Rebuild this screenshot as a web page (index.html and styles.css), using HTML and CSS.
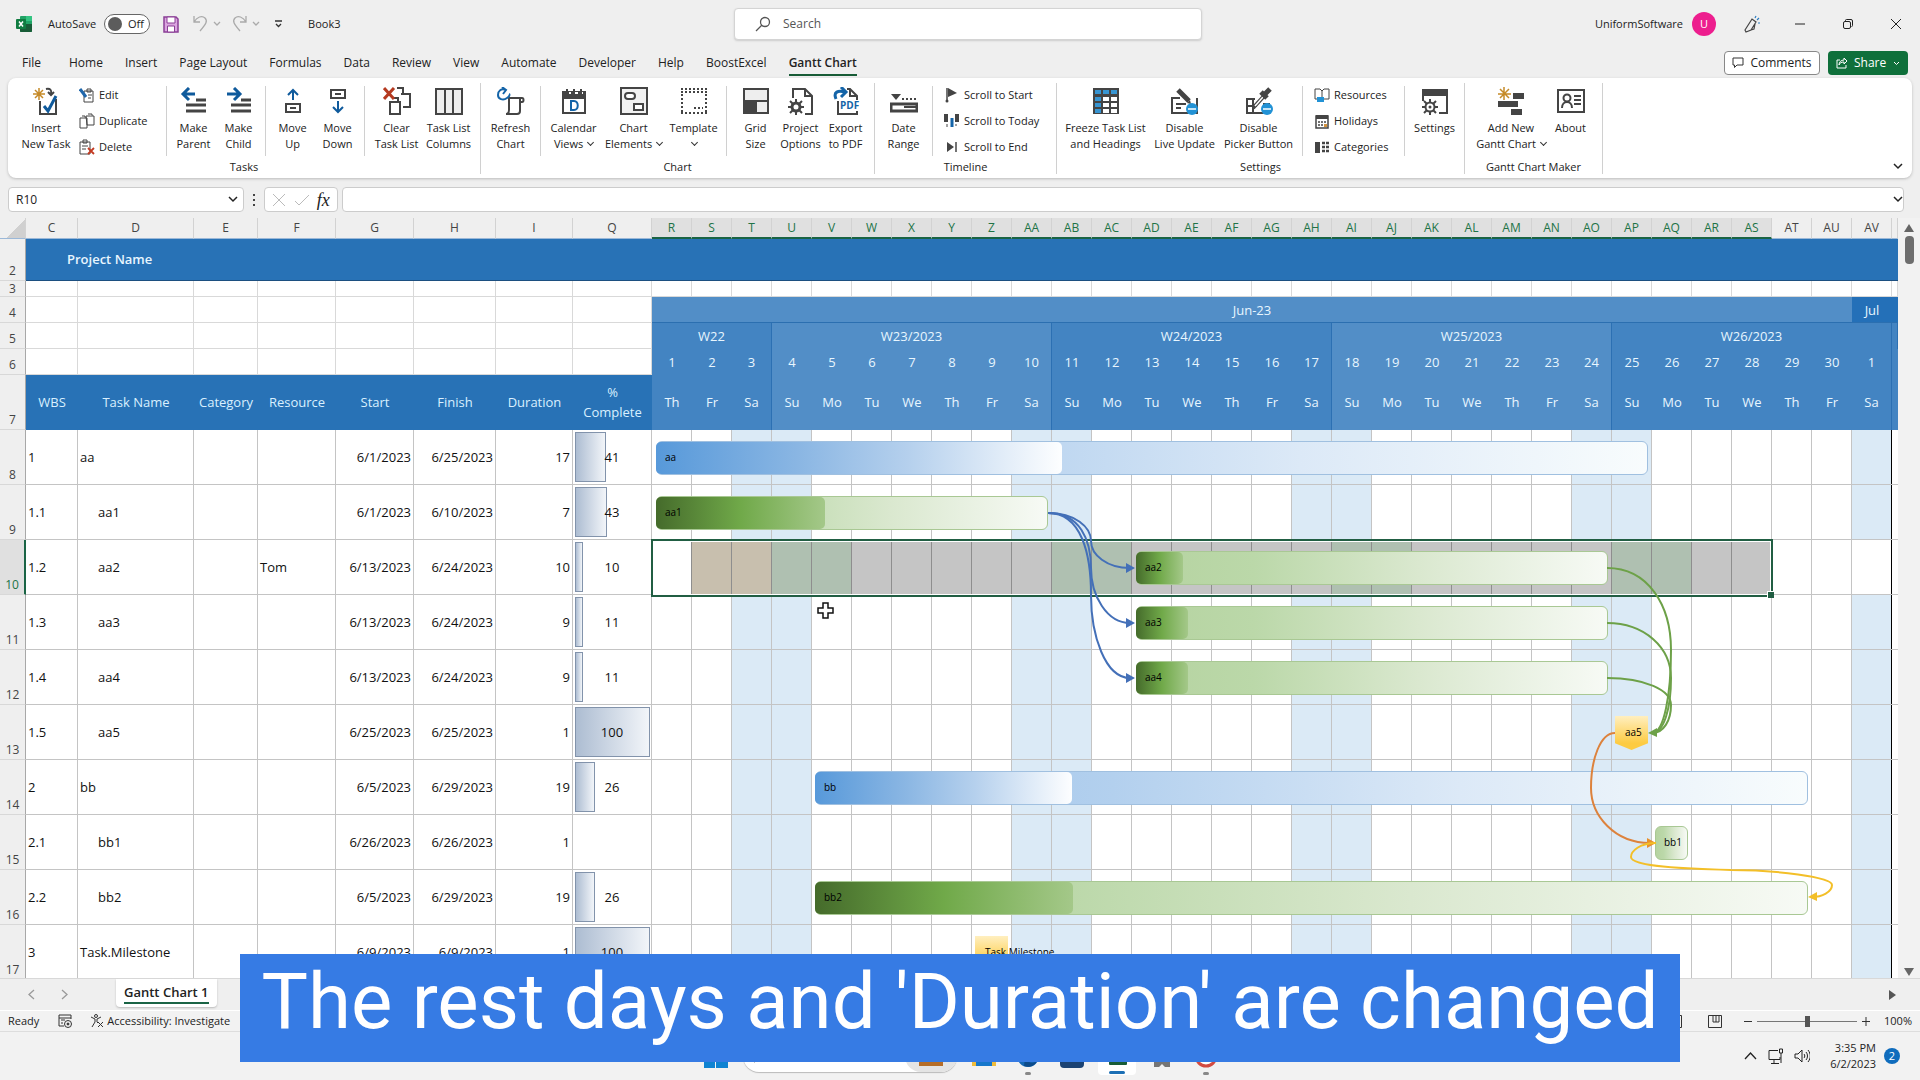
FILE: index.html
```html
<!DOCTYPE html>
<html lang="en">
<head>
<meta charset="utf-8">
<title>Book3 - Excel</title>
<link rel="stylesheet" href="styles.css">
</head>
<body>
<header class="titlebar">
  <div class="quick">
    <svg class="logo" width="16" height="16" viewBox="0 0 16 16"><rect x="4" width="12" height="16" rx="1" fill="#21a366"/><path d="M10 0h5a1 1 0 0 1 1 1v4h-6z" fill="#33c481"/><path d="M4 8h12v7a1 1 0 0 1-1 1H5a1 1 0 0 1-1-1z" fill="#185c37"/><rect y="3" width="10" height="10" rx="1" fill="#107c41"/><path d="M3 5.500l4 5M7 5.500l-4 5" stroke="#fff" stroke-width="1.500"/></svg>
    <span id="autosave-label">AutoSave</span>
    <button class="toggle" role="switch" aria-checked="false" aria-labelledby="autosave-label"><i></i>Off</button>
    <button class="plain save" aria-label="Save"><svg width="16" height="17" viewBox="0 0 16 17"><path d="M1 1h12l2 2v13H1z" fill="#dba6e0" stroke="#8b3f96" stroke-width="1.500"/><path d="M4 1h8v6H4zM4.500 10h7v6h-7z" fill="#fff" stroke="#8b3f96"/></svg></button>
    <button class="plain undo" aria-label="Undo"><svg width="28" height="18" viewBox="0 0 28 18" fill="none" stroke="#aaa" stroke-width="1.300"><path d="M1 1v6h6M1 7C4 2 9 0 12 3s1 6-5 13"/><path d="M21 7l3 3 3-3"/></svg></button>
    <button class="plain redo" aria-label="Redo"><svg width="28" height="18" viewBox="0 0 28 18" fill="none" stroke="#aaa" stroke-width="1.300"><path d="M14 1v6H8M14 7C11 2 6 0 3 3s-1 6 5 13"/><path d="M21 7l3 3 3-3"/></svg></button>
    <button class="plain custom" aria-label="Customize toolbar"><svg width="9" height="8" viewBox="0 0 9 8" fill="none" stroke="#333" stroke-width="1.300"><path d="M1 1h7M2 4l2.500 2.500L7 4"/></svg></button>
    <span class="book">Book3</span>
  </div>
  <label class="search"><svg width="16" height="16" viewBox="0 0 16 16" fill="none" stroke="#555" stroke-width="1.300"><circle cx="10" cy="6" r="4.500"/><path d="M7 9l-6 6"/></svg><input type="search" placeholder="Search" aria-label="Search"></label>
  <div class="account">
    <span>UniformSoftware</span><span class="avatar">U</span>
    <button class="plain" aria-label="Coming soon"><svg width="18" height="18" viewBox="0 0 18 18" fill="none" stroke="#444" stroke-width="1.200"><path d="M2 15L9 4l4 3-5 8-5 2zM8 15l3-1 1-5"/><path d="M12 3l1-2M14 5l2-2M15 8h2" stroke="#2b7cc0"/></svg></button>
    <button class="plain" aria-label="Minimize"><svg width="10" height="10" viewBox="0 0 10 10"><path d="M0 5h10" stroke="#222"/></svg></button>
    <button class="plain" aria-label="Restore"><svg width="10" height="10" viewBox="0 0 10 10" fill="none" stroke="#222"><rect x=".5" y="2.500" width="7" height="7" rx="1.500"/><path d="M2.500 2V1.500a1 1 0 0 1 1-1H8A1.500 1.500 0 0 1 9.500 2v4.500a1 1 0 0 1-1 1"/></svg></button>
    <button class="plain" aria-label="Close"><svg width="10" height="10" viewBox="0 0 10 10"><path d="M0 0l10 10M10 0L0 10" stroke="#222"/></svg></button>
  </div>
</header>

<nav class="tabs" aria-label="Ribbon tabs">
  <a href="#file" class="file">File</a><a href="#home">Home</a><a href="#insert">Insert</a><a href="#layout">Page Layout</a><a href="#formulas">Formulas</a><a href="#data">Data</a><a href="#review">Review</a><a href="#view">View</a><a href="#automate">Automate</a><a href="#developer">Developer</a><a href="#help">Help</a><a href="#boost">BoostExcel</a><a href="#gantt" class="active" aria-current="page">Gantt Chart</a>
  <button class="comments"><svg width="12" height="12" viewBox="0 0 12 12" fill="none" stroke="#333"><path d="M1 1h10v7H5l-2.500 2.500V8H1z"/></svg>Comments</button>
  <button class="share"><svg width="12" height="12" viewBox="0 0 12 12" fill="none" stroke="#fff"><path d="M4 3H1v8h9V8M8 1l3 3-3 3V5C5 5 4 6 3 8c0-3 2-5 5-5z"/></svg>Share<svg class="drop" width="7" height="5" viewBox="0 0 7 5" fill="none" stroke="#fff"><path d="M1 1l2.500 2.500L6 1"/></svg></button>
</nav>

<main class="workspace">
<section class="ribbon" aria-label="Gantt Chart ribbon">
  <div class="group">
    <div class="sections">
      <div class="section s-insert">
        <button class="big w58"><svg viewBox="0 0 28 28"><path d="M8 14v13h16V12" fill="none" stroke="#444" stroke-width="2"/><path d="M12 19l4 5 8-15" fill="none" stroke="#0f5a9c" stroke-width="3"/><path d="M7 1v12M1 7h12M3 3l8 8M11 3l-8 8" stroke="#c58a28" stroke-width="1.500"/><path d="M14 2c4-1 6 1 5 5M16 5l3 3 3-3" fill="none" stroke="#444" stroke-width="2"/></svg>Insert<br>New Task</button>
        <div class="smalls">
          <button><svg viewBox="0 0 16 16"><path d="M5 4h9v11H5z" fill="#fff" stroke="#444"/><path d="M8 2h4v3H8zM9 8h4M9 11h3" fill="none" stroke="#444"/><path d="M1 2l6 8" stroke="#1e66ab" stroke-width="3"/></svg>Edit</button>
          <button><svg viewBox="0 0 16 16" fill="#fff" stroke="#444"><path d="M1 5h7v10H1zM7 3h8v9H8z"/><path d="M3 3h3v2M9 1h4v2"/></svg>Duplicate</button>
          <button><svg viewBox="0 0 16 16"><path d="M1 3h10v12H1z" fill="#fff" stroke="#444"/><path d="M4 1h4v3H4zM3 7h6M3 10h4" fill="none" stroke="#444"/><path d="M9 9l6 6M15 9l-6 6" stroke="#c33a22" stroke-width="1.800"/></svg>Delete</button>
        </div>
      </div>
      <div class="section s-99">
        <button class="big w45"><svg viewBox="0 0 28 28"><path d="M16 13h10M6 18h20M6 24h20" stroke="#444" stroke-width="3"/><path d="M15 7H4M9 1L3 7l6 6" fill="none" stroke="#0f5a9c" stroke-width="3"/></svg>Make<br>Parent</button>
        <button class="big w45"><svg viewBox="0 0 28 28"><path d="M16 13h10M6 18h20M6 24h20" stroke="#444" stroke-width="3"/><path d="M2 7h12M9 1l6 6-6 6" fill="none" stroke="#0f5a9c" stroke-width="3"/></svg>Make<br>Child</button>
      </div>
      <div class="section s-99">
        <button class="big w45"><svg viewBox="0 0 28 28"><path d="M14 13V3M9 8l5-5 5 5" fill="none" stroke="#0f5a9c" stroke-width="2"/><path d="M7 17h14v8H7zM11 21h6" fill="none" stroke="#444" stroke-width="2"/></svg>Move<br>Up</button>
        <button class="big w45"><svg viewBox="0 0 28 28"><path d="M14 14v11M9 20l5 5 5-5" fill="none" stroke="#0f5a9c" stroke-width="2"/><path d="M7 3h14v8H7zM11 7h6" fill="none" stroke="#444" stroke-width="2"/></svg>Move<br>Down</button>
      </div>
      <div class="section s-117">
        <button class="big w52"><svg viewBox="0 0 28 28"><path d="M7 15h10v12H7zM18 7h9v13h-7M14 1h6v5M9 11h6v3" fill="none" stroke="#444" stroke-width="2"/><path d="M1 1l10 11M11 1L1 12" stroke="#b53a20" stroke-width="3"/></svg>Clear<br>Task List</button>
        <button class="big w52"><svg viewBox="0 0 28 28"><path d="M1 2h26v25H1zM10 2v25M18 2v25" fill="#eee" stroke="#444" stroke-width="2"/></svg>Task List<br>Columns</button>
      </div>
    </div>
    <h2>Tasks</h2>
  </div>
  <div class="group">
    <div class="sections">
      <div class="section s-59"><button class="big w52"><svg viewBox="0 0 28 28"><path d="M12 11h13c2 0 2 4 0 4h-2v9c0 3-2 3-3 3H9c2 0 3-1 3-4zM23 15v-4" fill="#fff" stroke="#444" stroke-width="2"/><path d="M9 3C4 1 1 4 1 8s5 6 9 3 2-4 2-4M5 0l4 3-3 4" fill="none" stroke="#1464a8" stroke-width="2"/></svg>Refresh<br>Chart</button></div>
      <div class="section s-186">
        <button class="big w58"><svg viewBox="0 0 28 28"><path d="M3 5h22v21H3z" fill="#fff" stroke="#444" stroke-width="2"/><path d="M3 4h22v8H3z" fill="#444"/><path d="M7 2v4M14 2v4M21 2v4" stroke="#444" stroke-width="2"/><path d="M9 6h2M15 6h3M22 6h1" stroke="#fff" stroke-width="2"/><path d="M11 14h3c5 0 5 9 0 9h-3z" fill="none" stroke="#1464a8" stroke-width="2"/></svg>Calendar<br>Views <b class="caret"></b></button>
        <button class="big w62"><svg viewBox="0 0 28 28"><path d="M1 1h26v26H1z" fill="#f1f1f1" stroke="#444" stroke-width="2"/><rect x="5" y="6" width="10" height="6" rx="3" fill="#fff" stroke="#444" stroke-width="2"/><path d="M14 17h9v6h-9z" fill="#fff" stroke="#444" stroke-width="2"/></svg>Chart<br>Elements <b class="caret"></b></button>
        <button class="big w58"><svg viewBox="0 0 28 28" fill="none" stroke="#444" stroke-width="2" stroke-dasharray="2 2"><path d="M1 2h26M1 5h26M2 7v20M26 7v20M1 26h26M14 21h9"/></svg>Template<br><b class="caret"></b></button>
      </div>
      <div class="section s-149">
        <button class="big w45"><svg viewBox="0 0 28 28"><path d="M2 2h24v24H2z" fill="#eee" stroke="#444" stroke-width="2"/><path d="M2 15h12v11H2z" fill="#444"/><path d="M14 15v11M2 14h24" stroke="#444" stroke-width="2"/></svg>Grid<br>Size</button>
        <button class="big w45"><svg viewBox="0 0 28 28"><path d="M6 11V2h12l7 7v18h-7M18 2v7h7" fill="none" stroke="#444" stroke-width="2"/><circle cx="9" cy="20" r="4" fill="none" stroke="#444" stroke-width="3"/><path d="M9 12v4M9 24v4M1 20h4M13 20h4M3 14l3 3M12 23l3 3M15 14l-3 3M6 23l-3 3" stroke="#444" stroke-width="2"/></svg>Project<br>Options</button>
        <button class="big w45"><svg viewBox="0 0 28 28"><path d="M6 14v13h19V9l-7-7h-3M18 2v7h7" fill="none" stroke="#444" stroke-width="2"/><path d="M4 12C1 5 6 3 13 5M9 0l5 5-5 5" fill="none" stroke="#1464a8" stroke-width="3"/><path d="M7 13h21v11H7z" fill="#fff"/><text x="8" y="22" font-size="10" font-weight="700" fill="#1464a8">PDF</text></svg>Export<br>to PDF</button>
      </div>
    </div>
    <h2>Chart</h2>
  </div>
  <div class="group">
    <div class="sections">
      <div class="section s-57"><button class="big w52"><svg viewBox="0 0 28 28"><path d="M1 7h10l-5 6z" fill="#444"/><path d="M12 12h16" stroke="#444" stroke-width="2" stroke-dasharray="2 2"/><path d="M0 17h28M0 24h28M1 17v7M27 17v7" stroke="#444" stroke-width="3"/><path d="M14 20h13" stroke="#444" stroke-width="2"/></svg>Date<br>Range</button></div>
      <div class="section smalls-section s-125"><div class="smalls">
        <button><svg viewBox="0 0 16 16"><path d="M3 1v13" stroke="#444" stroke-width="1.500"/><path d="M4 1l9 5-9 4z" fill="#444"/><circle cx="3" cy="14" r="1.500" fill="#444"/></svg>Scroll to Start</button>
        <button><svg viewBox="0 0 16 16"><path d="M2 1v8M13 1v8" stroke="#444" stroke-width="4"/><path d="M8 5v9" stroke="#1464a8" stroke-width="3"/><path d="M3 11v3M12 11v2" stroke="#444"/></svg>Scroll to Today</button>
        <button><svg viewBox="0 0 16 16"><path d="M3 3l7 5-7 5z" fill="#444"/><path d="M12 3v10" stroke="#444" stroke-width="1.500"/></svg>Scroll to End</button>
      </div></div>
    </div>
    <h2>Timeline</h2>
  </div>
  <div class="group">
    <div class="sections">
      <div class="section s-245">
        <button class="big w84"><svg viewBox="0 0 28 28"><path d="M1 1h26v26H1z" fill="#444"/><path d="M3 3h6v4H3zM11 3h6v4h-6zM19 3h6v4h-6zM3 10h6v4H3zM3 16h6v4H3zM3 22h6v4H3z" fill="#3795d2"/><path d="M11 10h6v4h-6zM19 10h6v4h-6zM11 16h6v4h-6zM19 16h6v4h-6zM11 22h6v4h-6zM19 22h6v4h-6z" fill="#fff"/></svg>Freeze Task List<br>and Headings</button>
        <button class="big w74"><svg viewBox="0 0 28 28"><path d="M9 11H1v15h25V11M5 17h10M5 21h5" fill="none" stroke="#444" stroke-width="2"/><path d="M7 3l11 11" stroke="#444" stroke-width="5"/><path d="M16 16l4 1-1-4z" fill="#444"/><circle cx="21" cy="22" r="6" fill="#2292d5"/><path d="M17 22h8" stroke="#fff" stroke-width="1.500"/></svg>Disable<br>Live Update</button>
        <button class="big w74"><svg viewBox="0 0 28 28"><path d="M10 12H2v14h20M2 19h10M8 12v14M18 17h7" fill="none" stroke="#444" stroke-width="2"/><path d="M8 21L20 8" stroke="#444" stroke-width="4"/><path d="M10 19l8-9" stroke="#fff" stroke-width="1.500"/><path d="M16 5l6 6M20 7l5-5" stroke="#444" stroke-width="5"/><circle cx="22" cy="22" r="6" fill="#2292d5"/><path d="M18 22h8" stroke="#fff" stroke-width="1.500"/></svg>Disable<br>Picker Button</button>
      </div>
      <div class="section smalls-section s-102"><div class="smalls">
        <button><svg viewBox="0 0 16 16"><path d="M1 2h5l2 2 2-2h5v10h-5l-2 2-2-2H1zM8 4v9" fill="#fff" stroke="#444"/><path d="M3 10h7v5H3z" fill="#2292d5"/></svg>Resources</button>
        <button><svg viewBox="0 0 16 16"><path d="M2 3h12v12H2z" fill="#fff" stroke="#444" stroke-width="1.500"/><path d="M2 2h12v4H2z" fill="#444"/><path d="M4 9h9M4 12h9" stroke="#444" stroke-width="1.500" stroke-dasharray="2 1"/><path d="M10 11h3v3h-3z" fill="#d4923d"/></svg>Holidays</button>
        <button><svg viewBox="0 0 16 16"><path d="M1 3h5v11H1z" fill="#444"/><path d="M8 4h7M8 8h7M8 12h7" stroke="#444" stroke-width="2.500" stroke-dasharray="3 1"/></svg>Categories</button>
      </div></div>
      <div class="section s-61"><button class="big w52"><svg viewBox="0 0 28 28"><path d="M1 3h26v6H1z" fill="#444"/><path d="M2 14V3h24v23H18" fill="none" stroke="#444" stroke-width="2"/><circle cx="9" cy="20" r="4.500" fill="#fff" stroke="#444" stroke-width="2"/><path d="M9 12v4M9 24v4M1 20h4M13 20h4M3 14l3 3M12 23l3 3M15 14l-3 3M6 23l-3 3" stroke="#444" stroke-width="2"/><circle cx="9" cy="20" r="1.500" fill="#444"/></svg>Settings</button></div>
    </div>
    <h2>Settings</h2>
  </div>
  <div class="group">
    <div class="sections">
      <div class="section s-137">
        <button class="big w74"><svg viewBox="0 0 28 28"><path d="M16 6h11v6H16zM1 14h20v6H1zM14 22h11v6H14z" fill="#444"/><path d="M7 0v13M1 7h13M3 2l9 9M12 2l-9 9" stroke="#c58a28" stroke-width="1.500"/></svg>Add New<br>Gantt Chart <b class="caret"></b></button>
        <button class="big w45"><svg viewBox="0 0 28 28"><path d="M1 3h26v22H1z" fill="#fff" stroke="#444" stroke-width="2"/><circle cx="10" cy="11" r="3.500" fill="none" stroke="#444" stroke-width="2"/><path d="M5 21c0-8 10-8 10 0M17 9h7M17 13h7M17 17h7" fill="none" stroke="#444" stroke-width="2"/></svg>About</button>
      </div>
    </div>
    <h2>Gantt Chart Maker</h2>
  </div>
  <button class="plain collapse" aria-label="Collapse the ribbon"><svg width="10" height="7" viewBox="0 0 10 7" fill="none" stroke="#222" stroke-width="1.500"><path d="M1 1l4 4 4-4"/></svg></button>
</section>

<section class="formula">
  <label class="namebox"><input value="R10" aria-label="Name box"><svg width="10" height="7" viewBox="0 0 10 7" fill="none" stroke="#222" stroke-width="1.500"><path d="M1 1l4 4 4-4"/></svg></label>
  <svg width="3" height="12" viewBox="0 0 3 12" fill="#444"><path d="M0 0h2v2H0zM0 5h2v2H0zM0 10h2v2H0z"/></svg>
  <div class="fx">
    <button class="plain" aria-label="Cancel"><svg width="14" height="14" viewBox="0 0 14 14" stroke="#bbb"><path d="M1 1l12 12M13 1L1 13"/></svg></button>
    <button class="plain" aria-label="Enter"><svg width="16" height="12" viewBox="0 0 16 12" fill="none" stroke="#bbb"><path d="M1 7l4 4L15 1"/></svg></button>
    <button class="plain fn" aria-label="Insert function">fx</button>
  </div>
  <label class="entry"><input aria-label="Formula"><svg width="10" height="7" viewBox="0 0 10 7" fill="none" stroke="#222" stroke-width="1.500"><path d="M1 1l4 4 4-4"/></svg></label>
</section>

<section class="sheet">
  <div class="canvas">
  <table>
    <colgroup><col class="c-row"><col class="c-c"><col class="c-d"><col class="c-e"><col class="c-f"><col class="c-g"><col class="c-h"><col class="c-i"><col class="c-q"><col class="c-day" span="31"><col></colgroup>
    <thead>
      <tr class="letters"><th class="corner"></th><th>C</th><th>D</th><th>E</th><th>F</th><th>G</th><th>H</th><th>I</th><th>Q</th><th>R</th><th>S</th><th>T</th><th>U</th><th>V</th><th>W</th><th>X</th><th>Y</th><th>Z</th><th>AA</th><th>AB</th><th>AC</th><th>AD</th><th>AE</th><th>AF</th><th>AG</th><th>AH</th><th>AI</th><th>AJ</th><th>AK</th><th>AL</th><th>AM</th><th>AN</th><th>AO</th><th>AP</th><th>AQ</th><th>AR</th><th>AS</th><th>AT</th><th>AU</th><th>AV</th><th></th></tr>
    </thead>
    <tbody>
      <tr class="project"><th>2</th><td colspan="40">Project Name</td></tr>
      <tr class="blank r3"><th>3</th><td></td><td></td><td></td><td></td><td></td><td></td><td></td><td></td><td class="thin" colspan="32"></td></tr>
      <tr class="blank r26"><th>4</th><td></td><td></td><td></td><td></td><td></td><td></td><td></td><td></td><td class="month" colspan="30">Jun-23</td><td class="month next">Jul</td><td class="month next"></td></tr>
      <tr class="blank r26"><th>5</th><td></td><td></td><td></td><td></td><td></td><td></td><td></td><td></td><td class="week" colspan="3">W22</td><td class="week light" colspan="7">W23/2023</td><td class="week" colspan="7">W24/2023</td><td class="week light" colspan="7">W25/2023</td><td class="week" colspan="7">W26/2023</td><td class="week"></td></tr>
      <tr class="blank r26 days"><th>6</th><td></td><td></td><td></td><td></td><td></td><td></td><td></td><td></td><td>1</td><td>2</td><td>3</td><td>4</td><td>5</td><td>6</td><td>7</td><td>8</td><td>9</td><td>10</td><td>11</td><td>12</td><td>13</td><td>14</td><td>15</td><td>16</td><td>17</td><td>18</td><td>19</td><td>20</td><td>21</td><td>22</td><td>23</td><td>24</td><td>25</td><td>26</td><td>27</td><td>28</td><td>29</td><td>30</td><td>1</td><td></td></tr>
      <tr class="fields days"><th>7</th><td>WBS</td><td>Task Name</td><td>Category</td><td>Resource</td><td>Start</td><td>Finish</td><td>Duration</td><td>%<br>Complete</td><td>Th</td><td>Fr</td><td>Sa</td><td>Su</td><td>Mo</td><td>Tu</td><td>We</td><td>Th</td><td>Fr</td><td>Sa</td><td>Su</td><td>Mo</td><td>Tu</td><td>We</td><td>Th</td><td>Fr</td><td>Sa</td><td>Su</td><td>Mo</td><td>Tu</td><td>We</td><td>Th</td><td>Fr</td><td>Sa</td><td>Su</td><td>Mo</td><td>Tu</td><td>We</td><td>Th</td><td>Fr</td><td>Sa</td><td></td></tr>
      <tr class="task"><th>8</th><td>1</td><td>aa</td><td></td><td></td><td>6/1/2023</td><td>6/25/2023</td><td>17</td><td><i style="width:41%"></i><span>41</span></td><td class="time" colspan="32"></td></tr>
      <tr class="task"><th>9</th><td>1.1</td><td class="sub">aa1</td><td></td><td></td><td>6/1/2023</td><td>6/10/2023</td><td>7</td><td><i style="width:43%"></i><span>43</span></td><td class="time" colspan="32"></td></tr>
      <tr class="task current"><th>10</th><td>1.2</td><td class="sub">aa2</td><td></td><td>Tom</td><td>6/13/2023</td><td>6/24/2023</td><td>10</td><td><i style="width:10%"></i><span>10</span></td><td class="time" colspan="32"></td></tr>
      <tr class="task"><th>11</th><td>1.3</td><td class="sub">aa3</td><td></td><td></td><td>6/13/2023</td><td>6/24/2023</td><td>9</td><td><i style="width:11%"></i><span>11</span></td><td class="time" colspan="32"></td></tr>
      <tr class="task"><th>12</th><td>1.4</td><td class="sub">aa4</td><td></td><td></td><td>6/13/2023</td><td>6/24/2023</td><td>9</td><td><i style="width:11%"></i><span>11</span></td><td class="time" colspan="32"></td></tr>
      <tr class="task"><th>13</th><td>1.5</td><td class="sub">aa5</td><td></td><td></td><td>6/25/2023</td><td>6/25/2023</td><td>1</td><td><i style="width:100%"></i><span>100</span></td><td class="time" colspan="32"></td></tr>
      <tr class="task"><th>14</th><td>2</td><td>bb</td><td></td><td></td><td>6/5/2023</td><td>6/29/2023</td><td>19</td><td><i style="width:26%"></i><span>26</span></td><td class="time" colspan="32"></td></tr>
      <tr class="task"><th>15</th><td>2.1</td><td class="sub">bb1</td><td></td><td></td><td>6/26/2023</td><td>6/26/2023</td><td>1</td><td></td><td class="time" colspan="32"></td></tr>
      <tr class="task"><th>16</th><td>2.2</td><td class="sub">bb2</td><td></td><td></td><td>6/5/2023</td><td>6/29/2023</td><td>19</td><td><i style="width:26%"></i><span>26</span></td><td class="time" colspan="32"></td></tr>
      <tr class="task"><th>17</th><td>3</td><td>Task.Milestone</td><td></td><td></td><td>6/9/2023</td><td>6/9/2023</td><td>1</td><td><i style="width:100%"></i><span>100</span></td><td class="time" colspan="32"></td></tr>
    </tbody>
  </table>
  <div class="chart">
    <div class="selection"></div>
    <div class="bar blue" style="left:5px;top:11px;width:992px"><i style="width:406px"></i><span>aa</span></div>
    <div class="bar green" style="left:5px;top:66px;width:392px"><i style="width:169px"></i><span>aa1</span></div>
    <div class="bar green" style="left:485px;top:121px;width:472px"><i style="width:47px"></i><span>aa2</span></div>
    <div class="bar green" style="left:485px;top:176px;width:472px"><i style="width:52px"></i><span>aa3</span></div>
    <div class="bar green" style="left:485px;top:231px;width:472px"><i style="width:52px"></i><span>aa4</span></div>
    <div class="mark" style="left:964px;top:286px"><span>aa5</span></div>
    <div class="bar blue" style="left:164px;top:341px;width:993px"><i style="width:257px"></i><span>bb</span></div>
    <div class="bar green" style="left:1004px;top:396px;width:33px"><span>bb1</span></div>
    <div class="bar green" style="left:164px;top:451px;width:993px"><i style="width:258px"></i><span>bb2</span></div>
    <div class="mark" style="left:324px;top:506px"><span>Task Milestone</span></div>
    <svg class="links" width="1240" height="550" viewBox="651 430 1240 550" fill="none" stroke-width="2">
      <g stroke="#4470b8"><path d="M1048 513C1075 513 1091 527 1091 541S1107 568 1130 568"/><path d="M1048 513C1080 513 1091 540 1091 568S1107 623 1130 623"/><path d="M1048 513C1082 513 1091 555 1091 595S1105 678 1130 678"/></g>
      <path d="M1126 563l9 5-9 5zM1126 618l9 5-9 5zM1126 673l9 5-9 5z" fill="#4470b8"/>
      <g stroke="#6da148"><path d="M1607 568C1648 568 1671 605 1671 650S1664 733 1652 733"/><path d="M1607 623C1645 623 1671 648 1671 678S1664 733 1652 733"/><path d="M1607 678C1645 678 1671 690 1671 705S1664 733 1652 733"/></g>
      <path d="M1648 733l9-5v9z" fill="#6da148"/>
      <path d="M1615 733C1600 733 1591 760 1591 788S1615 843 1650 843" stroke="#dd823c"/><path d="M1647 838l9 5-9 5z" fill="#e8902c"/>
      <path d="M1656 843C1640 843 1631 851 1631 857C1631 867 1690 869 1731 870C1775 870 1832 877 1832 885C1832 892 1822 897 1812 897" stroke="#f3bf28"/><path d="M1808 897l9-5v9z" fill="#f3bf28"/>
      <path d="M823 603h5v5h5v5h-5v5h-5v-5h-5v-5h5z" fill="#fff" stroke="#111" stroke-width="1.500"/>
    </svg>
  </div>
  </div>
  <div class="vscroll"><svg width="10" height="8" viewBox="0 0 10 8"><path d="M0 8l5-8 5 8z" fill="#666"/></svg><i></i><svg width="10" height="8" viewBox="0 0 10 8"><path d="M0 0l5 8 5-8z" fill="#666"/></svg></div>
</section>
</main>

<footer>
  <div class="sheettabs">
    <button class="plain" aria-label="Previous sheet"><svg width="8" height="11" viewBox="0 0 8 11" fill="none" stroke="#999" stroke-width="1.300"><path d="M6 1L1 5.500 6 10"/></svg></button>
    <button class="plain" aria-label="Next sheet"><svg width="8" height="11" viewBox="0 0 8 11" fill="none" stroke="#999" stroke-width="1.300"><path d="M1 1l5 4.500L1 10"/></svg></button>
    <a href="#sheet1"><span>Gantt Chart 1</span></a>
    <svg class="right" width="7" height="10" viewBox="0 0 7 10"><path d="M0 0l7 5-7 5z" fill="#555"/></svg>
  </div>
  <div class="status">
    <span class="ready">Ready</span>
    <svg width="14" height="14" viewBox="0 0 14 14" fill="none" stroke="#333"><path d="M6 12H1V1h12v4M1 4h12M3 6h4M3 9h2"/><circle cx="10" cy="10" r="3.500"/><circle cx="10" cy="10" r="1" fill="#333"/></svg>
    <svg class="access" width="14" height="14" viewBox="0 0 14 14" fill="none" stroke="#333"><circle cx="6" cy="2" r="1.500"/><path d="M1 3l4 2v3l-3 5M11 3L7 5v3l1 1M8 8l5 5M13 8l-5 5"/></svg>
    <span>Accessibility: Investigate</span>
    <div class="zoom">
      <svg width="14" height="13" viewBox="0 0 14 13" fill="none" stroke="#333"><path d="M.5.500h13v12H.5zM3 3h8v7H3zM5 5h4M5 8h4"/></svg>
      <svg width="14" height="13" viewBox="0 0 14 13" fill="none" stroke="#333"><path d="M.5.500h13v12H.5zM5 1v6h6M8 1v6M11 1v6"/></svg>
      <button class="plain" aria-label="Zoom out"><svg width="8" height="9" viewBox="0 0 8 9"><path d="M0 4.500h8" stroke="#333"/></svg></button>
      <input type="range" min="0" max="100" value="50" aria-label="Zoom">
      <button class="plain" aria-label="Zoom in"><svg width="8" height="9" viewBox="0 0 8 9"><path d="M0 4.500h8M4 0v9" stroke="#333"/></svg></button>
      <span>100%</span>
    </div>
  </div>
  <div class="taskbar">
    <div class="apps">
      <svg width="24" height="24" viewBox="0 0 24 24" fill="#0f83d2"><path d="M0 0h11v11H0zM12 0h12v11H12zM0 12h11v12H0zM12 12h12v12H12z"/></svg>
      <div class="pill"><svg width="14" height="14" viewBox="0 0 14 14" fill="none" stroke="#222" stroke-width="1.500"><circle cx="8" cy="6" r="4.500"/><path d="M5 10l-3 3"/></svg><i></i></div>
      <svg width="24" height="20" viewBox="0 0 24 20"><path d="M0 0h9l3 3h12v17H0z" fill="#f0bc3c"/><path d="M4 11h16v9H4z" fill="#1677cb"/></svg>
      <svg width="24" height="40" viewBox="0 0 24 40"><circle cx="12" cy="20" r="11" fill="#1468b5"/><path d="M9 22c3 5 8 6 12 3-2 5-8 7-13 5z" fill="#0c4b8a"/><rect x="9" y="36" width="6" height="3" rx="1.500" fill="#888"/></svg>
      <svg width="24" height="24" viewBox="0 0 24 24"><rect width="24" height="24" rx="4" fill="#1c4373"/><path d="M8 13h3v4H8zM13 13h3v4h-3z" fill="#8fb7df"/></svg>
      <div class="tile"><svg width="20" height="36" viewBox="0 0 20 36"><rect x="2" y="7" width="18" height="20" rx="1" fill="#185c37"/><rect y="11" width="11" height="12" fill="#107c41"/><rect x="2" y="33" width="16" height="3" rx="1.500" fill="#1c6fb5"/></svg></div>
      <svg width="24" height="24" viewBox="0 0 24 24"><path d="M4 10h16v13h-5l-3-3-3 3H4z" fill="#757575"/></svg>
      <svg width="24" height="40" viewBox="0 0 24 40"><circle cx="12" cy="20" r="10" fill="#fff" stroke="#d34b41" stroke-width="3"/><rect x="9" y="36" width="6" height="3" rx="1.500" fill="#888"/></svg>
    </div>
    <div class="tray">
      <svg width="13" height="8" viewBox="0 0 13 8" fill="none" stroke="#222" stroke-width="1.300"><path d="M1 7l5.500-6L12 7"/></svg>
      <svg width="17" height="16" viewBox="0 0 17 16" fill="none" stroke="#222"><path d="M11 2.500H2v9h11V9M7 12v3M4 15.500h8M12.500 1h3v4h-3zM14 5v10"/></svg>
      <svg width="16" height="14" viewBox="0 0 16 14" fill="none" stroke="#222"><path d="M1 5h3l4-4v12L4 9H1zM10 5c1 1 1 3 0 4M12 3c2 2 2 6 0 8M14 1c3 4 3 8 0 12"/></svg>
      <time>3:35 PM<br>6/2/2023</time>
      <span class="badge">2</span>
    </div>
  </div>
</footer>
<div class="caption"><p>The rest days and 'Duration' are changed</p></div>
</body>
</html>
```
FILE: styles.css
```css
* { box-sizing: border-box; }
body {
  margin: 0;
  height: 100vh;
  display: flex;
  flex-direction: column;
  overflow: hidden;
  background: #efefef;
  color: #222;
  font: 11px/16px "Open Sans", "Noto Sans", sans-serif;
}
button, input { font: inherit; color: inherit; }
button { border: 0; background: none; padding: 0; }
a { color: inherit; text-decoration: none; }
svg { display: block; flex: none; }
.plain { display: flex; align-items: center; justify-content: center; }

/* Title bar */
.titlebar {
  height: 48px;
  flex: none;
  display: grid;
  grid-template-columns: 1fr 468px 1fr;
  align-items: center;
  padding-left: 16px;
}
.quick, .account { display: flex; align-items: center; }
.logo { margin-right: 16px; }
.toggle {
  width: 46px;
  height: 20px;
  margin: 0 13px 0 8px;
  border: 1px solid #666;
  border-radius: 10px;
  background: #fff;
  display: flex;
  align-items: center;
  gap: 6px;
  padding-left: 3px;
}
.toggle i { width: 14px; height: 14px; border-radius: 50%; background: #5c5c5c; }
.undo { margin-left: 14px; }
.redo { margin-left: 11px; }
.custom { margin: 0 25px 0 14px; }
.search {
  height: 32px;
  background: #fff;
  border: 1px solid #d4d4d4;
  border-radius: 4px;
  display: flex;
  align-items: center;
  padding-left: 20px;
  gap: 12px;
  box-shadow: 0 1px 2px #ccc;
}
input { border: 0; background: none; outline: 0; min-width: 0; padding: 0; }
.search input { flex: 1; font-size: 12px; }
.search input::placeholder { color: #555; opacity: 1; }
.account { justify-content: flex-end; }
.avatar {
  width: 24px;
  height: 24px;
  margin: 0 12px 0 9px;
  border-radius: 50%;
  background: #ed1e8e;
  color: #fff;
  line-height: 24px;
  text-align: center;
}
.account .plain { width: 48px; height: 32px; }

/* Ribbon tabs */
.tabs {
  height: 30px;
  flex: none;
  display: flex;
  align-items: center;
  gap: 22px;
  padding: 0 12px 0 22px;
  font-size: 12px;
}
.tabs a { height: 26px; line-height: 26px; border-bottom: 2px solid transparent; }
.tabs .file { margin-right: 6px; }
.tabs .active { font-weight: 600; border-color: #185c37; }
.comments, .share {
  height: 24px;
  display: flex;
  align-items: center;
  gap: 6px;
  padding: 0 8px;
  border-radius: 4px;
}
.comments { margin-left: auto; width: 96px; border: 1px solid #888; background: #fff; justify-content: center; }
.share { width: 80px; background: #0f703b; color: #fff; margin-left: -14px; }
.share .drop { margin-left: auto; }

/* Ribbon */
.workspace { flex: 1; min-height: 0; display: flex; flex-direction: column; }
.ribbon {
  margin: 0 8px;
  height: 100px;
  flex: none;
  display: flex;
  background: #fff;
  border-radius: 8px;
  box-shadow: 0 1px 3px #bbb;
}
.group { margin: 5px 0 4px; border-right: 1px solid #d0d0d0; display: flex; flex-direction: column; }
.group h2 { margin: auto 0 0; font-size: 11px; line-height: 14px; font-weight: 400; text-align: center; }
.sections { display: flex; padding-top: 3px; }
.section { height: 70px; display: flex; justify-content: center; }
.section + .section { border-left: 1px solid #d0d0d0; }
.s-insert { width: 158px; padding-left: 9px; }
.s-99 { width: 99px; }
.s-117 { width: 116px; }
.s-59 { width: 59px; }
.s-186 { width: 186px; }
.s-149 { width: 148px; }
.s-57 { width: 57px; }
.s-125 { width: 124px; }
.s-245 { width: 245px; }
.s-102 { width: 102px; }
.s-61 { width: 60px; }
.s-137 { width: 137px; }
.big { display: block; align-self: start; padding: 1px 0; line-height: 16px; white-space: nowrap; text-align: center; }
.big svg { width: 28px; height: 28px; margin: 0 auto 5px; }
.w45 { width: 45px; }
.w52 { width: 52px; }
.w58 { width: 58px; }
.w62 { width: 62px; }
.w74 { width: 74px; }
.w84 { width: 84px; }
.caret { display: inline-block; width: 5px; height: 5px; border: solid #333; border-width: 0 1px 1px 0; transform: rotate(45deg); margin: 0 0 3px 2px; }
.smalls { flex: 1; display: flex; flex-direction: column; gap: 8px; padding: 0 0 0 4px; }
.smalls button { display: flex; align-items: center; gap: 4px; height: 18px; white-space: nowrap; }
.smalls svg { width: 16px; height: 16px; }
.smalls-section { padding-left: 7px; }
.collapse { margin: auto 9px 8px auto; }

/* Formula bar */
.formula { height: 25px; margin: 9px 16px 6px 8px; flex: none; display: flex; align-items: center; font-size: 12px; }
.namebox, .entry, .fx {
  height: 25px;
  display: flex;
  align-items: center;
  background: #fff;
  border: 1px solid #ccc;
  border-radius: 4px;
}
.namebox { width: 236px; padding: 0 5px 0 7px; margin-right: 9px; }
.namebox input, .entry input { flex: 1; }
.fx { width: 74px; margin: 0 4px 0 8px; justify-content: space-evenly; }
.fn { font: italic 18px/20px "Liberation Serif", serif; }
.entry { flex: 1; }

/* Worksheet */
.sheet { flex: 1; min-height: 0; display: flex; }
.canvas { flex: 1; min-width: 0; position: relative; overflow: hidden; background: #fff; }
table { width: 100%; table-layout: fixed; border-collapse: separate; border-spacing: 0; font-size: 13px; color: #111; }
.c-row { width: 26px; }
.c-c { width: 52px; }
.c-d { width: 116px; }
.c-e { width: 64px; }
.c-f, .c-g { width: 78px; }
.c-h { width: 82px; }
.c-i { width: 77px; }
.c-q { width: 79px; }
.c-day { width: 40px; }
th, td { padding: 0; line-height: 20px; text-align: center; overflow: hidden; white-space: nowrap; }
th { background: #efefef; color: #444; font-weight: 400; }
.letters { height: 21px; font-size: 12px; }
.letters th { border-right: 1px solid #d2d2d2; border-bottom: 1px solid #9bb8d8; }
.letters th:nth-child(n+10):nth-child(-n+37) { background: #e0e0e0; color: #217346; border-bottom: 2px solid #1a6445; line-height: 19px; }
.letters .corner { background: linear-gradient(135deg, #efefef 60%, #d0d0d0 60%); }
tbody th { vertical-align: bottom; font-size: 12px; line-height: 18px; border-right: 1px solid #a8a8a8; border-bottom: 1px solid #d8d8d8; }
.project { height: 42px; }
.project td { background: #2872b6; color: #e8f6ff; border-bottom: 1px solid #1c4f80; text-align: left; padding: 0 0 2px 41px; font-weight: 600; }
.blank td { border-right: 1px solid #d9d9d9; border-bottom: 1px solid #d9d9d9; }
.r3 { height: 16px; }
.r3 th { line-height: 15px; }
.thin { background: repeating-linear-gradient(90deg, transparent 0 39px, #d9d9d9 39px 40px); }
.r26 { height: 26px; }
.blank .month { background: #528ec7; color: #e8f6ff; border: 0; border-bottom: 1px solid #2b6fb0; }
.blank .next { background: #2470b8; }
.blank .week { background: #4384c2; color: #e8f6ff; border: 0; border-right: 1px solid #2c70b3; }
.blank .light { background: #528ec7; }
.fields { height: 55px; color: #d9f0ff; }
.fields td { background: #2872b6; padding-bottom: 2px; }
.days td:nth-child(n+10) { background: #4384c2; color: #e8f6ff; border: 0; }
.days td:nth-child(n+13):nth-child(-n+19), .days td:nth-child(n+27):nth-child(-n+33) { background: #528ec7; }
.days td:nth-child(7n+5):nth-child(n+10) { border-right: 1px solid #2c70b3; }
.task { height: 55px; }
.task td { border-right: 1px solid #c4c4c4; border-bottom: 1px solid #c4c4c4; text-align: left; padding-left: 2px; }
.task .sub { padding-left: 20px; }
.task td:nth-child(6), .task td:nth-child(7), .task td:nth-child(8) { text-align: right; padding-right: 2px; }
.task td:nth-child(9) { position: relative; padding: 0 1px 0 2px; text-align: center; }
.task td i { display: block; height: 50px; border: 1px solid #8293ab; background: linear-gradient(90deg, #adbdd2, #f2f5f9); }
.task td i + span { position: absolute; inset: 17px 0 auto 0; }
.task .time {
  padding: 0;
  border-right: 0;
  background:
    linear-gradient(90deg, transparent 1239px, #000 1239px 1240px, #fff 1240px),
    repeating-linear-gradient(90deg, transparent 0 39px, #c4c4c4 39px 40px),
    repeating-linear-gradient(90deg, #fff 0 80px, #dbeaf6 80px 160px, #fff 160px 280px);
}
.current th { background: #e0e0e0; color: #217346; border-right: 2px solid #1a6445; }
.task.current .time { background: linear-gradient(90deg, transparent 1239px, #000 1239px 1240px, #fff 1240px), repeating-linear-gradient(90deg, #fff 0 39px, #c4c4c4 39px 40px); }

/* Gantt layer over the grid */
.chart { position: absolute; left: 651px; top: 212px; }
.selection {
  position: absolute;
  left: 0;
  top: 109px;
  width: 1122px;
  height: 58px;
  border: 2px solid #215e43;
  box-shadow: inset 0 0 0 1px #fff;
  background:
    repeating-linear-gradient(90deg, transparent 0 38px, #8e8e8e 38px 39px, transparent 39px 40px),
    linear-gradient(90deg, #fff 39px, #c8bfae 39px 119px, #afc0b1 119px 199px, #c5c5c5 199px 399px, #afc0b1 399px 479px, #c5c5c5 479px 679px, #afc0b1 679px 759px, #c5c5c5 759px 959px, #afc0b1 959px 1039px, #c5c5c5 1039px);
}
.selection::after { content: ""; position: absolute; right: -3px; bottom: -3px; width: 6px; height: 6px; background: #215e43; border: solid #fff; border-width: 1px 0 0 1px; }
.bar { position: absolute; height: 34px; border: 1px solid #a9c894; border-radius: 6px; font-size: 10px; color: #000; }
.bar i { position: absolute; left: -1px; top: 0; height: 32px; border-radius: 5px; }
.bar span { position: absolute; left: 8px; top: 7px; white-space: nowrap; }
.blue { border-color: #a0c0e0; background: linear-gradient(90deg, #9ac2ea, #b3d0ee 30%, #dce9f7 65%, #f8fcfd); }
.blue i { background: linear-gradient(90deg, #5799da, #8ab6e3 35%, #b5d0ed 62%, #fdfeff); }
.green { background: linear-gradient(90deg, #b5d3a0, #bbd8a9 25%, #dae8cf 60%, #f7faf5); }
.green i { background: linear-gradient(90deg, #456b2b, #70a949 50%, #a4c889); }
.mark {
  position: absolute;
  width: 33px;
  height: 34px;
  font-size: 10px;
  color: #000;
}
.mark::before { content: ""; position: absolute; inset: 0; background: linear-gradient(#ffefc0, #fdcb42 80%); clip-path: polygon(0 0, 100% 0, 100% 80%, 50% 100%, 0 80%); }
.mark span { position: absolute; left: 10px; top: 8px; white-space: nowrap; }
.links { position: absolute; left: 0; top: 0; }
.vscroll { width: 22px; flex: none; display: flex; flex-direction: column; align-items: center; padding: 6px 0 2px; background: #f2f2f2; }
.vscroll i { width: 9px; height: 28px; margin: 4px 0 auto; border-radius: 4px; background: #6e6e6e; }

/* Sheet tabs, status bar and taskbar */
footer { flex: none; }
.sheettabs { height: 32px; display: flex; align-items: center; padding: 0 24px 0 28px; border-top: 1px solid #d8d8d8; }
.sheettabs .plain { width: 8px; margin-right: 25px; }
.sheettabs a { align-self: start; height: 28px; margin-left: 22px; padding: 2px 8px 0; background: #fff; border-radius: 0 0 4px 4px; box-shadow: 0 1px 2px #bbb; font-size: 13px; font-weight: 600; }
.sheettabs a span { display: block; height: 23px; line-height: 22px; border-bottom: 2px solid #1a6445; }
.sheettabs .right { margin-left: auto; }
.status { height: 22px; display: flex; align-items: center; padding: 0 8px; background: #f2f2f2; border-top: 1px solid #fff; border-bottom: 1px solid #ddd; }
.ready { margin-right: 19px; }
.access { margin: 0 3px 0 18px; }
.zoom { margin-left: auto; display: flex; align-items: center; }
.zoom svg + svg { margin: 0 22px 0 26px; }
.zoom > span { margin-left: 14px; }
.zoom input { width: 100px; height: 14px; margin: 0 5px; appearance: none; background: linear-gradient(#777, #777) center / 100% 1px no-repeat; }
.zoom input::-webkit-slider-thumb { appearance: none; width: 5px; height: 11px; background: #555; }
.taskbar { height: 48px; background: #f2f2f2; display: flex; align-items: center; padding: 0 20px 0 704px; }
.apps { display: flex; align-items: center; gap: 20px; }
.pill { width: 214px; height: 32px; margin: 0 -5px; border-radius: 16px; background: #fff; box-shadow: 0 1px 1px #bbb; display: flex; align-items: center; justify-content: space-between; padding-left: 9px; }
.pill i { width: 52px; height: 32px; border-radius: 16px; background: linear-gradient(#b56d28, #b56d28) center / 24px 20px no-repeat #e4e4e4; }
.tile { width: 38px; height: 38px; margin: 0 -6px; border-radius: 4px; background: #fff; display: grid; place-items: center; }
.tray { margin-left: auto; display: flex; align-items: center; gap: 10px; text-align: right; }
.tray time { margin: 0 -2px 0 10px; }
.badge { width: 16px; height: 16px; border-radius: 50%; background: #0f6cbd; color: #fff; text-align: center; }
.caption { position: fixed; left: 0; right: 0; bottom: 18px; display: flex; justify-content: center; pointer-events: none; }
.caption p { margin: 0; height: 108px; padding: 0 21px; background: #367be4; color: #fff; font: 78px/96px Roboto, sans-serif; white-space: nowrap; }
```
